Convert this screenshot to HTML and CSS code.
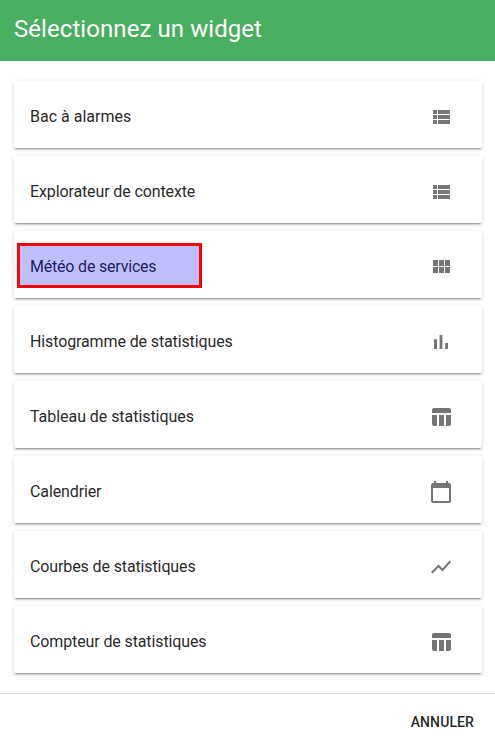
FILE: index.html
```html
<!DOCTYPE html>
<html lang="fr">
<head>
<meta charset="utf-8">
<title>Sélectionnez un widget</title>
<link rel="stylesheet" href="styles.css">
</head>
<body>
<header class="title">Sélectionnez un widget</header>
<main class="list">
<div class="card"><span>Bac à alarmes</span><svg class="icon" viewBox="0 0 24 24"><path d="M4 14h4v-4H4v4zm0 5h4v-4H4v4zM4 9h4V5H4v4zm5 5h12v-4H9v4zm0 5h12v-4H9v4zM9 5v4h12V5H9z"/></svg></div>
<div class="card"><span class="tight">Explorateur de contexte</span><svg class="icon" viewBox="0 0 24 24"><path d="M4 14h4v-4H4v4zm0 5h4v-4H4v4zM4 9h4V5H4v4zm5 5h12v-4H9v4zm0 5h12v-4H9v4zM9 5v4h12V5H9z"/></svg></div>
<div class="card"><span class="tighter">Météo de services</span><svg class="icon" viewBox="0 0 24 24"><path d="M4 11h5V5H4v6zm0 7h5v-6H4v6zm6 0h5v-6h-5v6zm6 0h5v-6h-5v6zm-6-7h5V5h-5v6zm6-6v6h5V5h-5z"/></svg><div class="highlight"></div></div>
<div class="card"><span class="tight">Histogramme de statistiques</span><svg class="icon" viewBox="0 0 24 24"><path d="M5 9.2h3V19H5zM10.6 5h2.8v14h-2.8zm5.6 8H19v6h-2.8z"/></svg></div>
<div class="card"><span class="snug">Tableau de statistiques</span><svg class="icon" viewBox="0 0 24 24"><path d="M10 10.02h5V21h-5zM17 21h3c1.1 0 2-.9 2-2v-9h-5v11zm3-18H5c-1.1 0-2 .9-2 2v3h19V5c0-1.1-.9-2-2-2zM3 19c0 1.1.9 2 2 2h3V10H3v9z"/></svg></div>
<div class="card"><span class="tight">Calendrier</span><svg class="icon" viewBox="0 0 24 24"><path d="M20 3h-1V1h-2v2H7V1H5v2H4c-1.1 0-2 .9-2 2v16c0 1.1.9 2 2 2h16c1.1 0 2-.9 2-2V5c0-1.1-.9-2-2-2zm0 18H4V8h16v13z"/></svg></div>
<div class="card"><span class="tight">Courbes de statistiques</span><svg class="icon" viewBox="0 0 24 24"><path d="M3.5 18.49l6-6.01 4 4L22 6.92l-1.41-1.41-7.09 7.97-4-4L2 16.99z"/></svg></div>
<div class="card"><span class="tight">Compteur de statistiques</span><svg class="icon" viewBox="0 0 24 24"><path d="M10 10.02h5V21h-5zM17 21h3c1.1 0 2-.9 2-2v-9h-5v11zm3-18H5c-1.1 0-2 .9-2 2v3h19V5c0-1.1-.9-2-2-2zM3 19c0 1.1.9 2 2 2h3V10H3v9z"/></svg></div>
</main>
<footer class="actions"><button class="cancel">Annuler</button></footer>
</body>
</html>
```

FILE: styles.css
```css
* { box-sizing: border-box; }
body {
  margin: 0;
  height: 745px;
  overflow: hidden;
  display: flex;
  flex-direction: column;
  background: #fff;
  color: rgba(0, 0, 0, .87);
  font: 16px/24px Roboto, sans-serif;
}
.title {
  height: 61px;
  padding: 13px 14px 0;
  background: #4aae60;
  color: #fff;
  font-size: 24px;
  line-height: 32px;
  letter-spacing: .07px;
}
.list {
  height: 632px;
  padding: 20px 13px 0 14px;
  display: flex;
  flex-direction: column;
  gap: 8px;
}
.card {
  position: relative;
  flex: none;
  height: 67px;
  padding: 5px 29px 0 16px;
  display: flex;
  align-items: center;
  justify-content: space-between;
  background: #fff;
  border-radius: 2px;
  box-shadow: 0 3px 1px -2px rgba(0, 0, 0, .2), 0 2px 2px 0 rgba(0, 0, 0, .14), 0 1px 5px 0 rgba(0, 0, 0, .12);
}
.snug { letter-spacing: -.05px; }
.tight { letter-spacing: -.12px; }
.tighter { letter-spacing: -.2px; }
.icon { width: 24px; height: 24px; fill: #757575; }
.highlight {
  position: absolute;
  left: 3px;
  top: 12px;
  width: 185px;
  height: 45px;
  border: 3px solid #f00;
  background: rgba(0, 0, 255, .25);
  background-clip: padding-box;
}
.actions {
  flex: 1;
  border-top: 1px solid #e0e0e0;
  padding: 10px 13px 0;
  text-align: right;
}
.cancel {
  height: 36px;
  padding: 0 8px;
  border: 0;
  background: none;
  color: rgba(0, 0, 0, .87);
  font: 500 14px/36px Roboto, sans-serif;
  letter-spacing: .1px;
  text-transform: uppercase;
}
```
